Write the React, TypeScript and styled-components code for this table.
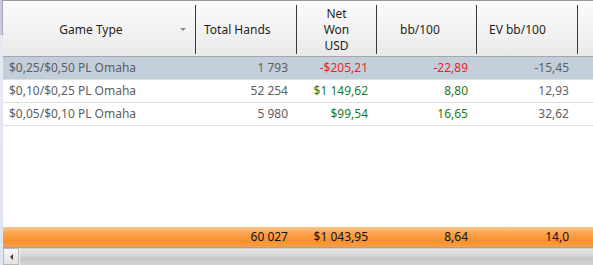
import React, {FunctionComponent} from 'react';
import styled, {createGlobalStyle} from 'styled-components';


/* ====== Global ====== */

const GlobalStyle = createGlobalStyle`
  html, body {
    margin: 0;
    padding: 0;
    background: #ffffff;
  }
  body {
    font-family: "Noto Sans", "Open Sans", sans-serif;
  }
`

/* ====== Containers ====== */

const COLUMNS = '193px 101px 80px 100px 101px 1fr';

const Frame = styled.div`
  display: flex;
  width: 593px;
  height: 265px;
  overflow: hidden;
  background: #ffffff;
`

const LeftStrip = styled.div`
  display: flex;
  flex-direction: column;
  width: 3px;
  flex-shrink: 0;
  background: linear-gradient(180deg, #e6ebf2 0%, #dfe5ee 100%);
`

const StripTop = styled.div`
  height: 35px;
  background: #c9ccdb;
  border-right: 1px solid #9fa3b8;
  box-sizing: border-box;
`

const Grid = styled.div`
  display: flex;
  flex-direction: column;
  flex: 1;
  min-width: 0;
`

const HeaderRow = styled.div`
  display: grid;
  grid-template-columns: ${COLUMNS};
  height: 57px;
  box-sizing: border-box;
  padding-top: 4px;
  border-top: 1px solid #9c9c9c;
  border-bottom: 1px solid #a6a6a6;
  background: linear-gradient(180deg, #fbfbfb 0%, #f3f3f3 50%, #e9e9e9 100%);
`

const Body = styled.div`
  flex: 1;
  background: #ffffff;
`

const DataRow = styled.div<{ $selected?: boolean }>`
  display: grid;
  grid-template-columns: ${COLUMNS};
  height: 23px;
  box-sizing: border-box;
  align-items: center;
  border-bottom: 1px solid #dfdfdf;
  background: ${p => p.$selected ? '#c3cedb' : '#ffffff'};
`

const FooterRow = styled.div`
  display: grid;
  grid-template-columns: ${COLUMNS};
  height: 20px;
  align-items: center;
  background: linear-gradient(180deg, #fcc48a 0%, #fba04a 35%, #f8922c 70%, #fa9e45 100%);
`

const ScrollBar = styled.div`
  display: flex;
  height: 18px;
  box-sizing: border-box;
  border-top: 1px solid #a3a3a3;
  background: #f0f0f0;
`

/* ====== UI Elements ====== */

const HeaderCell = styled.div<{ $align?: 'left' | 'center'; $pad?: number; $padRight?: number }>`
  display: flex;
  align-items: center;
  justify-content: ${p => p.$align === 'left' ? 'flex-start' : 'center'};
  padding-left: ${p => p.$pad ?? 0}px;
  padding-right: ${p => p.$padRight ?? 0}px;
  border-right: 1px solid #3a3a3a;
  height: 49px;
  font-size: 12px;
  line-height: 16px;
  color: #1e1e1e;
  text-align: center;
  position: relative;
`

const LastHeaderCell = styled.div`
  height: 49px;
`

const SortArrow = styled.span`
  position: absolute;
  right: 9px;
  top: 23px;
  width: 0;
  height: 0;
  border-left: 3px solid transparent;
  border-right: 3px solid transparent;
  border-top: 3px solid #8a8a8a;
`

const Cell = styled.div<{ $tone?: 'plain' | 'neg' | 'pos' | 'muted' | 'total'; $left?: boolean }>`
  font-size: 12px;
  line-height: 16px;
  white-space: nowrap;
  text-align: ${p => p.$left ? 'left' : 'right'};
  padding: ${p => p.$left ? '0 0 0 6px' : '0 9px 0 0'};
  color: ${p => ({
    plain: '#5e5e5e',
    neg: '#f21e1e',
    pos: '#1f7a1c',
    muted: '#5e5e5e',
    total: '#111111',
  }[p.$tone ?? 'plain'])};
`

const ArrowButton = styled.div`
  display: flex;
  align-items: center;
  justify-content: center;
  width: 16px;
  box-sizing: border-box;
  border: 1px solid #b8b8b8;
  background: linear-gradient(180deg, #f7f7f7 0%, #e2e2e2 100%);
`

const LeftTriangle = styled.span`
  width: 0;
  height: 0;
  border-top: 3px solid transparent;
  border-bottom: 3px solid transparent;
  border-right: 3px solid #3c3c3c;
`

const Track = styled.div`
  flex: 1;
  margin-left: 1px;
  border-top: 1px solid #d2d2d2;
  background: linear-gradient(180deg, #e4e4e4 0%, #d6d6d6 40%, #c6c6c6 60%, #d4d4d4 100%);
`

/* ====== Data ====== */

interface IRow {
  game: string;
  hands: string;
  won: string;
  bb: string;
  ev: string;
  negative: boolean;
}

const rows: IRow[] = [
  { game: '$0,25/$0,50 PL Omaha', hands: '1 793', won: '-$205,21', bb: '-22,89', ev: '-15,45', negative: true },
  { game: '$0,10/$0,25 PL Omaha', hands: '52 254', won: '$1 149,62', bb: '8,80', ev: '12,93', negative: false },
  { game: '$0,05/$0,10 PL Omaha', hands: '5 980', won: '$99,54', bb: '16,65', ev: '32,62', negative: false },
];

/* ====== Components ====== */

const App: FunctionComponent = () => {
  return (
    <Frame>
      <GlobalStyle />
      <LeftStrip>
        <StripTop />
      </LeftStrip>
      <Grid>
        <HeaderRow>
          <HeaderCell $padRight={16}>
            Game Type
            <SortArrow />
          </HeaderCell>
          <HeaderCell $align="left" $pad={8}>Total Hands</HeaderCell>
          <HeaderCell>Net<br />Won<br />USD</HeaderCell>
          <HeaderCell $align="left" $pad={23}>bb/100</HeaderCell>
          <HeaderCell $align="left" $pad={12}>EV bb/100</HeaderCell>
          <LastHeaderCell />
        </HeaderRow>
        <Body>
          {rows.map((r, i) => (
            <DataRow key={r.game} $selected={i === 0}>
              <Cell $left>{r.game}</Cell>
              <Cell>{r.hands}</Cell>
              <Cell $tone={r.negative ? 'neg' : 'pos'}>{r.won}</Cell>
              <Cell $tone={r.negative ? 'neg' : 'pos'}>{r.bb}</Cell>
              <Cell $tone="muted">{r.ev}</Cell>
              <div />
            </DataRow>
          ))}
        </Body>
        <FooterRow>
          <div />
          <Cell $tone="total">60 027</Cell>
          <Cell $tone="total">$1 043,95</Cell>
          <Cell $tone="total">8,64</Cell>
          <Cell $tone="total">14,0</Cell>
          <div />
        </FooterRow>
        <ScrollBar>
          <ArrowButton>
            <LeftTriangle />
          </ArrowButton>
          <Track />
        </ScrollBar>
      </Grid>
    </Frame>
  )
}

export default App;
